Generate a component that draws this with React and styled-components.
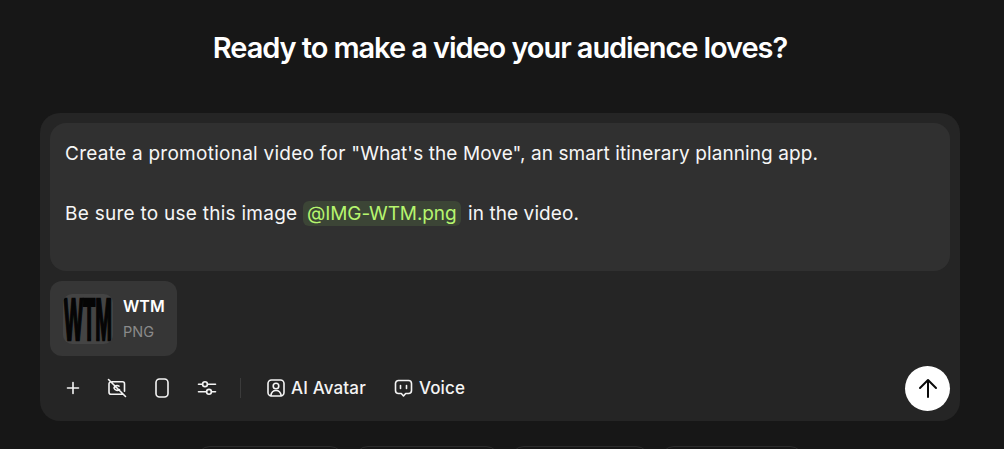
import React from "react";
import styled, { createGlobalStyle } from "styled-components";

const Global = createGlobalStyle`
  html, body { margin: 0; padding: 0; background: #171717; overflow: hidden; }
  * { box-sizing: border-box; }
`;
const Page = styled.main`
  width: 1004px; height: 449px; overflow: hidden; background: #171717; color: #fff;
  font-family: Inter, "Liberation Sans", sans-serif;
  display: flex; flex-direction: column; padding: 0 44px 0 40px;
`;
const Title = styled.h1`
  margin: 28px 0 0; font-size: 29px; line-height: 40px; font-weight: 600; letter-spacing: -1.07px; text-align: center; height: 85px; flex: none;
`;
const Composer = styled.section`
  background: #252525; border-radius: 20px; padding: 10px; height: 308px; flex: none;
  display: flex; flex-direction: column;
`;
const Prompt = styled.div`
  background: #303030; border-radius: 16px; height: 148px; padding: 16px 15px 0; font-size: 19px; line-height: 30px; color: #f6f6f6;
  letter-spacing: 0.09px; flex: none;
`;
const Para = styled.p`
  margin: 0 0 30px; white-space: nowrap;
`;
const Lead = styled.span`
  letter-spacing: 0.26px;
`;
const Mention = styled.span`
  color: #b6f56e; background: #3c4536; border-radius: 6px; padding: 1px 4px; letter-spacing: -0.1px; margin-right: 2px;
`;
const Attachment = styled.div`
  margin-top: 10px; width: 127px; height: 75px; border-radius: 12px; background: #363636;
  display: flex; align-items: center; gap: 10px; padding: 0 13px;
  flex: none;
`;
const Thumb = styled.div`
  width: 50px; height: 50px; border-radius: 9px; background: #444; overflow: hidden; flex: none;
`;
const ThumbMark = styled.text`
  font-family: "Liberation Sans", sans-serif; font-weight: 700; font-size: 20px; fill: #050505; stroke: #050505; stroke-width: 0.9px;
`;
const FileMeta = styled.div`display:flex; flex-direction:column; gap:7px; margin-top:-1px;`;
const FileName = styled.div`font-size:16px; line-height:20px; font-weight:600; color:#fff;`;
const FileType = styled.div`font-size:14.5px; line-height:18px; color:#8a8a8a;`;
const Toolbar = styled.div`
  display:flex; align-items:center; margin-top:9px; padding:0 0 0 12px; height:46px;
`;
const Icon = styled.button`
  all:unset; width:21px; height:21px; display:flex; align-items:center; justify-content:center; margin-right:${p=>p.$gap}px;
`;
const Divider = styled.div`width:1px; height:20px; background:#3b3b3b; margin:0 26px 0 23px;`;
const Labeled = styled.button`
  all:unset; display:flex; align-items:center; gap:6px; font-size:17px; letter-spacing:0.15px; font-weight:500; color:#f4f4f4; margin-right:${p=>p.$gap}px;
`;
const Send = styled.button`
  all:unset; margin-left:auto; width:45px; height:45px; border-radius:50%; background:#fff; display:flex; align-items:center; justify-content:center;
`;
const Chips = styled.div`display:flex; margin:25px 0 0 156px; gap:10px;`;
const Chip = styled.div`width:${p=>p.$w}px; height:30px; flex:none; border:1px solid #2c2c2c; border-radius:14px;`;

const S = {fill:"none",stroke:"#f4f4f4",strokeWidth:1.6,strokeLinecap:"round",strokeLinejoin:"round"};

export default function App(){
  return <Page><Global/>
    <Title>Ready to make a video your audience loves?</Title>
    <Composer>
      <Prompt>
        <Para><Lead>Create a promotional video for </Lead>"What's the Move", an smart itinerary planning app.</Para>
        <Para><Lead>Be sure to use this image </Lead><Mention>@IMG-WTM.png</Mention> in the video.</Para>
      </Prompt>
      <Attachment>
        <Thumb>
          <svg width="50" height="50" viewBox="0 0 50 50">
            <g transform="translate(0 46) scale(1 3)">
              <ThumbMark x="1" y="0" textLength="48" lengthAdjust="spacingAndGlyphs">WTM</ThumbMark>
            </g>
          </svg>
        </Thumb>
        <FileMeta><FileName>WTM</FileName><FileType>PNG</FileType></FileMeta>
      </Attachment>
      <Toolbar>
        <Icon $gap={23}><svg width="16" height="16" viewBox="0 0 16 16" {...S}><path d="M8 2.500v11M2.500 8h11"/></svg></Icon>
        <Icon $gap={24}><svg width="20" height="20" viewBox="0 0 20 20" {...S}><path d="M5 3.800h10.500a2 2 0 0 1 2 2v7.400M15.500 16.200H4a2 2 0 0 1-2-2V5.800a2 2 0 0 1 1-1.700M1.500 1.500l17 17M12 8.200c-2-1.500-4.500-.5-5 1.800 1 2.500 3.500 3 5.500 1.600"/></svg></Icon>
        <Icon $gap={24}><svg width="14" height="20" viewBox="0 0 14 20" {...S}><rect x="1" y="1" width="12" height="18" rx="3.500"/></svg></Icon>
        <Icon $gap={0}><svg width="20" height="20" viewBox="0 0 20 20" {...S}><path d="M1.500 6.200h4M10.500 6.200h8M1.500 13.800h8M14.500 13.800h4"/><circle cx="8" cy="6.200" r="2.400"/><circle cx="12" cy="13.800" r="2.400"/></svg></Icon>
        <Divider/>
        <Labeled $gap={28}><svg width="18" height="18" viewBox="0 0 18 18" {...S}><rect x="1" y="1" width="16" height="16" rx="3.500"/><circle cx="9" cy="7" r="2.800"/><path d="M3.800 16.500c.6-3.400 2.600-5 5.200-5s4.600 1.600 5.200 5"/></svg>AI Avatar</Labeled>
        <Labeled $gap={0}><svg width="19" height="19" viewBox="0 0 19 19" {...S}><path d="M4.500 1.500h10a3 3 0 0 1 3 3v7a3 3 0 0 1-3 3h-2.800l-2.200 2.500-2.200-2.500H4.500a3 3 0 0 1-3-3v-7a3 3 0 0 1 3-3z"/><path d="M6.500 6.500v3M12.500 6.500v3"/></svg>Voice</Labeled>
        <Send aria-label="Send"><svg width="24" height="24" viewBox="0 0 24 24" fill="none" stroke="#0a0a0a" strokeWidth="2" strokeLinecap="round" strokeLinejoin="round"><path d="M12 21V4M4 12l8-8 8 8"/></svg></Send>
      </Toolbar>
    </Composer>
    <Chips><Chip $w={148}/><Chip $w={146}/><Chip $w={140}/><Chip $w={144}/></Chips>
  </Page>;
}
